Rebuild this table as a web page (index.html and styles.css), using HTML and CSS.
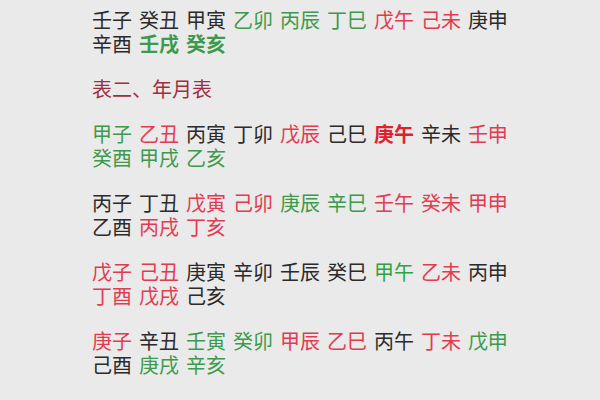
FILE: index.html
```html
<!DOCTYPE html>
<html lang="zh">
<head>
<meta charset="utf-8">
<link rel="stylesheet" href="styles.css">
</head>
<body>
<div class="page">
  <div class="block">
    <div class="line"><span class="k">壬子</span> <span class="k">癸丑</span> <span class="k">甲寅</span> <span class="g">乙卯</span> <span class="g">丙辰</span> <span class="g">丁巳</span> <span class="r">戊午</span> <span class="r">己未</span> <span class="k">庚申</span></div>
    <div class="line"><span class="k">辛酉</span> <span class="g b">壬戌</span> <span class="g b">癸亥</span></div>
  </div>
  <div class="block">
    <div class="line"><span class="title">表二、年月表</span></div>
  </div>
  <div class="block">
    <div class="line"><span class="g">甲子</span> <span class="r">乙丑</span> <span class="k">丙寅</span> <span class="k">丁卯</span> <span class="r">戊辰</span> <span class="k">己巳</span> <span class="r b">庚午</span> <span class="k">辛未</span> <span class="r">壬申</span></div>
    <div class="line"><span class="g">癸酉</span> <span class="g">甲戌</span> <span class="g">乙亥</span></div>
  </div>
  <div class="block">
    <div class="line"><span class="k">丙子</span> <span class="k">丁丑</span> <span class="r">戊寅</span> <span class="r">己卯</span> <span class="g">庚辰</span> <span class="g">辛巳</span> <span class="r">壬午</span> <span class="r">癸未</span> <span class="r">甲申</span></div>
    <div class="line"><span class="k">乙酉</span> <span class="r">丙戌</span> <span class="r">丁亥</span></div>
  </div>
  <div class="block">
    <div class="line"><span class="r">戊子</span> <span class="r">己丑</span> <span class="k">庚寅</span> <span class="k">辛卯</span> <span class="k">壬辰</span> <span class="k">癸巳</span> <span class="g2">甲午</span> <span class="r">乙未</span> <span class="k">丙申</span></div>
    <div class="line"><span class="r">丁酉</span> <span class="r">戊戌</span> <span class="k">己亥</span></div>
  </div>
  <div class="block">
    <div class="line"><span class="r">庚子</span> <span class="k">辛丑</span> <span class="g">壬寅</span> <span class="g">癸卯</span> <span class="r">甲辰</span> <span class="r">乙巳</span> <span class="k">丙午</span> <span class="r">丁未</span> <span class="g">戊申</span></div>
    <div class="line"><span class="k">己酉</span> <span class="g">庚戌</span> <span class="g">辛亥</span></div>
  </div>
</div>
</body>
</html>
```
FILE: styles.css
```css
html, body {
  margin: 0;
  padding: 0;
  background: #eaeaea;
}
body {
  width: 600px;
  height: 400px;
  overflow: hidden;
  font-family: "Noto Sans CJK SC", "Noto Sans", sans-serif;
  font-size: 20px;
  color: #2b2b2b;
}
.page {
  padding: 8px 0 0 92px;
  display: flex;
  flex-direction: column;
  gap: 21px;
}
.line {
  line-height: 24px;
  height: 24px;
  white-space: nowrap;
  word-spacing: 2.5px;
}
.line span {
  display: inline-block;
  height: 24px;
  line-height: 24px;
  vertical-align: top;
  overflow: visible;
}
.k { color: #2b2b2b; }
.g { color: #3d9a4c; }
.g2 { color: #30a33e; }
.r { color: #e23a50; }
.b { font-weight: 700; }
.r.b { color: #e0202e; }
.title { color: #9e2f40; }
```
